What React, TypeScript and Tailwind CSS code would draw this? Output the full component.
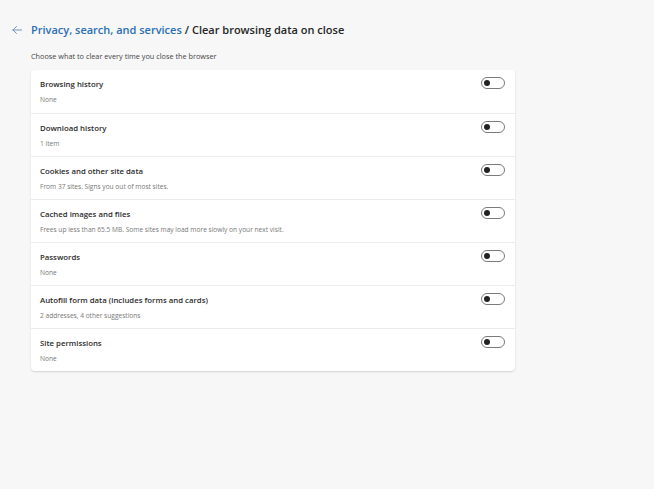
import React from "react";

const rows = [
  { title: "Browsing history", sub: "None" },
  { title: "Download history", sub: "1 item" },
  { title: "Cookies and other site data", sub: "From 37 sites. Signs you out of most sites." },
  { title: "Cached images and files", sub: "Frees up less than 65.5 MB. Some sites may load more slowly on your next visit." },
  { title: "Passwords", sub: "None" },
  { title: "Autofill form data (includes forms and cards)", sub: "2 addresses, 4 other suggestions" },
  { title: "Site permissions", sub: "None" },
];

const Toggle = () => (
  <div className="w-[24px] h-[12px] rounded-full border border-[#7a7a7a] bg-white flex items-center px-[2px]">
    <div className="w-[6px] h-[6px] rounded-full bg-[#222]" />
  </div>
);

export default function App() {
  return (
    <div className="w-[654px] h-[489px] bg-[#f7f7f7] font-['Open_Sans',sans-serif] pt-[20px]">
      <div className="pl-[12px] flex items-center h-[20px]">
        <svg width="19" height="10" viewBox="0 0 19 10" fill="none" stroke="#6f95c2" strokeWidth="1" strokeLinecap="round">
          <path d="M1 5 L9.5 5 M1 5 L4.5 1.5 M1 5 L4.5 8.5" />
        </svg>
        <span className="text-[11px] font-semibold text-[#2a6fb5]">Privacy, search, and services</span>
        <span className="text-[11px] font-semibold text-[#262626] ml-[3px]">/ Clear browsing data on close</span>
      </div>
      <div className="pl-[31px] text-[7.3px] text-[#444] leading-[10px] pt-[11px] h-[30px]">
        Choose what to clear every time you close the browser
      </div>
      <div className="ml-[31px] w-[484px] bg-white rounded-[4px] shadow-[0_1px_2px_rgba(0,0,0,0.15)]">
        {rows.map((r, i) => (
          <div
            key={r.title}
            className={`h-[43px] flex items-start justify-between pl-[9px] pr-[10px] ${i > 0 ? "border-t border-[#ececec]" : ""}`}
          >
            <div className="pt-[9px]">
              <div className="text-[7.8px] font-semibold text-[#2b2b2b] leading-[11px]">{r.title}</div>
              <div className="text-[6.6px] text-[#777] leading-[9px] mt-[5px]">{r.sub}</div>
            </div>
            <div className="pt-[7px]">
              <Toggle />
            </div>
          </div>
        ))}
      </div>
    </div>
  );
}
